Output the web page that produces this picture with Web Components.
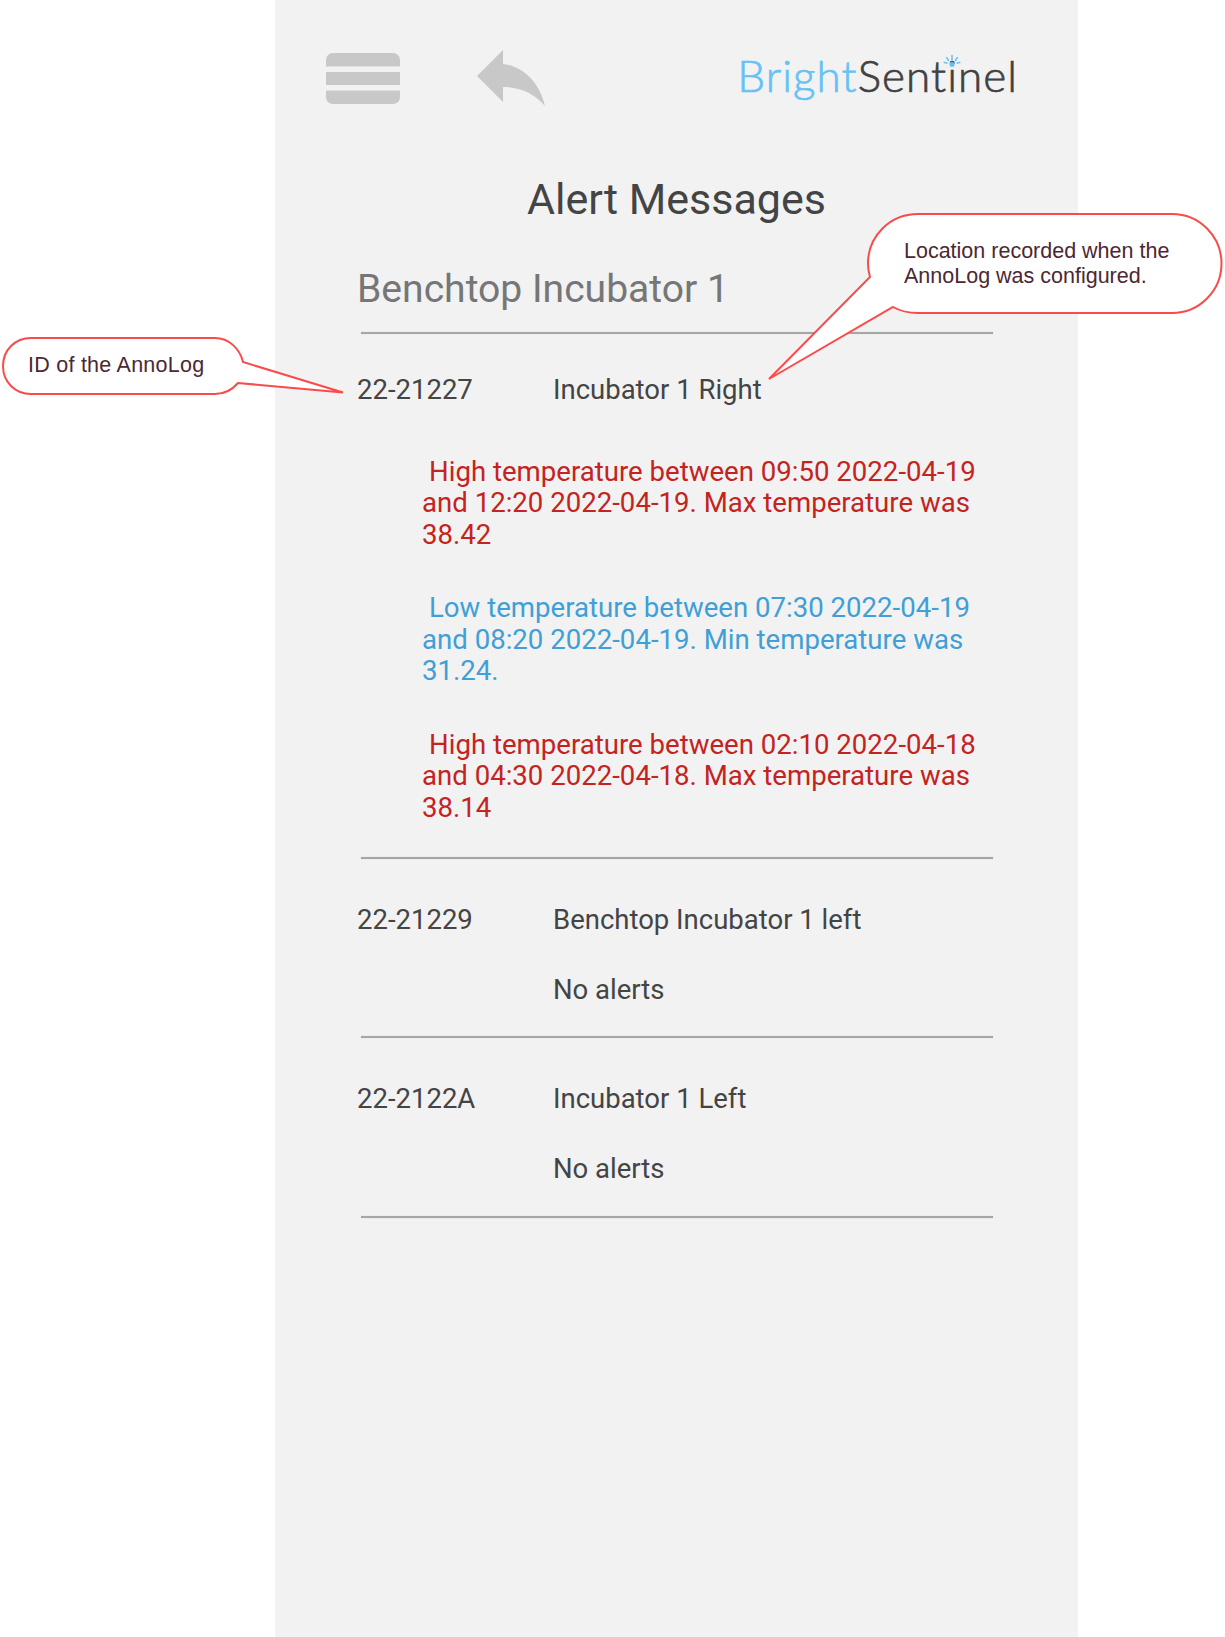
<!DOCTYPE html>
<html>
<head>
<meta charset="utf-8">
<title>Alert Messages</title>
<style>
  html, body { margin: 0; background: #fff; }
  body { font-family: Roboto, "Liberation Sans", sans-serif; }
</style>
</head>
<body>
<alert-page>
  <top-bar></top-bar>
  <page-title heading="Alert Messages" sub="Benchtop Incubator 1"></page-title>
  <log-entry log-id="22-21227" location="Incubator 1 Right">
    <alert-message level="high">High temperature between 09:50 2022-04-19 and 12:20 2022-04-19. Max temperature was 38.42</alert-message>
    <alert-message level="low">Low temperature between 07:30 2022-04-19 and 08:20 2022-04-19. Min temperature was 31.24.</alert-message>
    <alert-message level="high">High temperature between 02:10 2022-04-18 and 04:30 2022-04-18. Max temperature was 38.14</alert-message>
  </log-entry>
  <log-entry log-id="22-21229" location="Benchtop Incubator 1 left" empty></log-entry>
  <log-entry log-id="22-2122A" location="Incubator 1 Left" empty></log-entry>
</alert-page>
<call-out kind="location">Location recorded when the<br>AnnoLog was configured.</call-out>
<call-out kind="id">ID of the AnnoLog</call-out>

<script>
class AlertPage extends HTMLElement {
    constructor() {
        super();
        this.attachShadow({ mode: 'open' });
        this.shadowRoot.innerHTML = `
            <style>
                :host {
                    display: block;
                    box-sizing: border-box;
                    width: 803px;
                    height: 1637px;
                    margin-left: 275px;
                    background: #f2f2f2;
                    overflow: hidden;
                }
            </style>
            <slot></slot>
        `;
    }
}

class TopBar extends HTMLElement {
    constructor() {
        super();
        this.attachShadow({ mode: 'open' });
        this.shadowRoot.innerHTML = `
            <style>
                :host {
                    display: flex;
                    align-items: flex-start;
                    height: 172px;
                    box-sizing: border-box;
                    padding: 50px 0 0 50.500px;
                }
                .menu { display: block; width: 74px; height: 51px; margin-top: 2.500px; }
                .back { display: block; width: 68px; height: 57px; margin: 0 0 0 77.500px; }
                .logo {
                    position: relative;
                    margin-left: auto;
                    margin-right: 60px;
                    margin-top: -4px;
                    font-family: Lato, sans-serif;
                    font-weight: 300;
                    font-size: 44px;
                    line-height: 58px;
                    letter-spacing: 1.050px;
                    -webkit-text-stroke: 0.700px currentColor;
                    white-space: nowrap;
                    color: #404040;
                }
                .logo span { color: #66c2f5; }
                .spark { position: absolute; right: 57px; top: 9px; width: 18px; height: 12px; }
            </style>
            <svg class="menu" viewBox="0 0 74 51" fill="#c8c8c8">
                <path d="M7 0H67a7 7 0 0 1 7 7V13.500H0V7a7 7 0 0 1 7-7Z"/>
                <rect x="0" y="19" width="74" height="13"/>
                <path d="M0 37.500H74V44a7 7 0 0 1-7 7H7a7 7 0 0 1-7-7Z"/>
            </svg>
            <svg class="back" viewBox="0 0 68 57" fill="#c8c8c8">
                <path d="M26 0V14C44 16 62 30 68 56C58 44 44 37 26 37V52L0 26Z"/>
            </svg>
            <div class="logo"><span>Bright</span>Sentinel
                <svg class="spark" viewBox="0 0 18 12" fill="none" stroke="#66c2f5" stroke-width="1.500">
                    <circle cx="9" cy="9.500" r="2.500" fill="#66c2f5" stroke="none"/>
                    <path d="M9 5V0M5.800 6L3.400 2.200M12.200 6L14.600 2.200M4.400 8.200L0.600 7.200M13.600 8.200L17.400 7.200"/>
                </svg>
            </div>
        `;
    }
}

class PageTitle extends HTMLElement {
    constructor() {
        super();
        this.attachShadow({ mode: 'open' });
    }

    connectedCallback() {
        this.shadowRoot.innerHTML = `
            <style>
                :host { display: block; }
                h1 {
                    margin: 0;
                    font: 400 43px/54px Roboto, sans-serif;
                    color: #444;
                    text-align: center;
                }
                h2 {
                    margin: 38px 0 0 82px;
                    font: 400 39.100px/50px Roboto, sans-serif;
                    color: #767676;
                }
                .rule { height: 2px; margin: 18px 85px 0 86px; background: #a6a6a6; box-shadow: 0 0 1px #b4b4b4; }
            </style>
            <h1>${this.getAttribute('heading')}</h1>
            <h2>${this.getAttribute('sub')}</h2>
            <div class="rule"></div>
        `;
    }
}

class LogEntry extends HTMLElement {
    constructor() {
        super();
        this.attachShadow({ mode: 'open' });
    }

    connectedCallback() {
        const empty = this.hasAttribute('empty');
        this.shadowRoot.innerHTML = `
            <style>
                :host {
                    display: block;
                    font: 400 27.500px/36px Roboto, sans-serif;
                    color: #444;
                }
                .head { display: flex; padding: ${empty ? 43 : 38}px 0 0 82px; }
                .id { width: 196px; flex: none; }
                .none { margin: 34px 0 0 278px; }
                .list { padding: 47.500px 85px 0 147px; display: flex; flex-direction: column; gap: 42px; }
                .rule { height: 2px; margin: ${empty ? 28.5 : 33.5}px 85px 0 86px; background: #a6a6a6; box-shadow: 0 0 1px #b4b4b4; }
            </style>
            <div class="head">
                <div class="id">${this.getAttribute('log-id')}</div>
                <div>${this.getAttribute('location')}</div>
            </div>
            ${empty ? '<div class="none">No alerts</div>' : '<div class="list"><slot></slot></div>'}
            <div class="rule"></div>
        `;
    }
}

class AlertMessage extends HTMLElement {
    constructor() {
        super();
        this.attachShadow({ mode: 'open' });
    }

    connectedCallback() {
        const color = this.getAttribute('level') === 'low' ? '#3f9fd6' : '#c4231e';
        this.shadowRoot.innerHTML = `
            <style>
                :host {
                    display: block;
                    font: 400 27.600px/31.500px Roboto, sans-serif;
                    color: ${color};
                    text-indent: 7px;
                }
            </style>
            <slot></slot>
        `;
    }
}

// callout shapes are in page coordinates, they sit over the mockup
const CALLOUTS = {
    location: {
        box: [760, 205, 470, 185],
        path: 'M918 214H1172a49.500 49.500 0 0 1 0 99H918C909 313 900 311 893 307L769 379L870 277C868 270 868 268 868 263.500C868 236 890 214 918 214Z',
        text: 'left:904px;top:239px;'
    },
    id: {
        box: [0, 330, 350, 70],
        path: 'M31 338H215C229 338 240 349 243 362L343 392.500L238 383C232 390 224 394 215 394H31C15 394 3 382 3 366C3 350 15 338 31 338Z',
        text: 'left:28px;top:353px;letter-spacing:0.250px;'
    }
};

class CallOut extends HTMLElement {
    constructor() {
        super();
        this.attachShadow({ mode: 'open' });
    }

    connectedCallback() {
        const c = CALLOUTS[this.getAttribute('kind')];
        const [x, y, w, h] = c.box;
        this.shadowRoot.innerHTML = `
            <style>
                :host { display: block; }
                svg { position: absolute; left: ${x}px; top: ${y}px; }
                .text {
                    position: absolute;
                    font: 400 21.500px/25px "Liberation Sans", Arial, sans-serif;
                    ${c.text}
                    color: #4b2833;
                    white-space: nowrap;
                }
            </style>
            <svg width="${w}" height="${h}" viewBox="${x} ${y} ${w} ${h}">
                <path d="${c.path}" fill="#fff" stroke="#fb4a4a" stroke-width="2" stroke-linejoin="miter"/>
            </svg>
            <div class="text"><slot></slot></div>
        `;
    }
}

customElements.define('alert-page', AlertPage);
customElements.define('top-bar', TopBar);
customElements.define('page-title', PageTitle);
customElements.define('log-entry', LogEntry);
customElements.define('alert-message', AlertMessage);
customElements.define('call-out', CallOut);
</script>
</body>
</html>
